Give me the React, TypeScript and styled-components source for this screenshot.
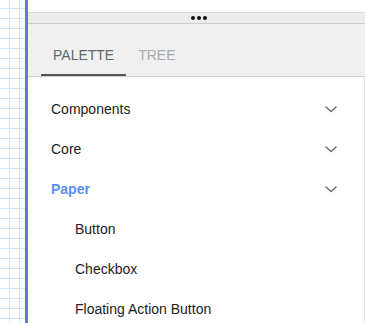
import React from "react";
import styled, { createGlobalStyle } from "styled-components";

const Global = createGlobalStyle`
  html, body { margin: 0; padding: 0; background: #fff; }
  body { font-family: "Liberation Sans", Arial, sans-serif; overflow: hidden; }
  * { box-sizing: border-box; }
`;

const Page = styled.div`
  display: flex;
  width: 365px;
  height: 323px;
  overflow: hidden;
`;

const Canvas = styled.div`
  width: 25px;
  flex: none;
  background-color: #fff;
  background-image:
    linear-gradient(to right, #cfe2f3 1px, transparent 1px),
    linear-gradient(to bottom, #cfe2f3 1px, transparent 1px);
  background-size: 10px 10px;
  background-position: 9px 8px;
`;

const Divider = styled.div`
  width: 3px;
  flex: none;
  background: #6a76d6;
`;

const Panel = styled.div`
  flex: 1;
  display: flex;
  flex-direction: column;
  min-width: 0;
  overflow: hidden;
`;

const TopGap = styled.div`
  flex: none;
  height: 12px;
  background: #fff;
`;

const Handle = styled.div`
  flex: none;
  height: 12px;
  background: #ececec;
  border-top: 1px solid #dcdcdc;
  border-bottom: 1px solid #cdcdcd;
  display: flex;
  align-items: center;
  justify-content: center;
  gap: 2px;
  padding-left: 4px;
`;

const Dot = styled.span`
  width: 4px;
  height: 4px;
  border-radius: 50%;
  background: #111;
`;

const TabBar = styled.div`
  flex: none;
  height: 53px;
  background: #f0f0f0;
  border-bottom: 1px solid #cfcfcf;
  display: flex;
  align-items: flex-end;
  padding-left: 13px;
`;

const Tab = styled.div<{ $active?: boolean }>`
  height: 40px;
  line-height: 38px;
  padding: 0 12px;
  font-size: 14px;
  color: ${(p) => (p.$active ? "#666" : "#aaa")};
  border-bottom: 2px solid ${(p) => (p.$active ? "#555" : "transparent")};
`;

const List = styled.div`
  flex: none;
  height: 260px;
  background: #fff;
  border-right: 1px solid #dedede;
  padding-top: 12px;
`;

const Row = styled.div<{ $indent?: boolean; $active?: boolean }>`
  height: 40px;
  line-height: 40px;
  display: flex;
  align-items: center;
  justify-content: space-between;
  padding-left: ${(p) => (p.$indent ? "47px" : "23px")};
  padding-right: 21px;
  font-size: 14px;
  color: ${(p) => (p.$active ? "#5591f0" : "#222")};
  font-weight: ${(p) => (p.$active ? 700 : 400)};
`;

const Chevron = () => (
  <svg width="24" height="24" viewBox="0 0 24 24">
    <path d="M6.5 9.5 L12 14.5 L17.5 9.5" fill="none" stroke="#707070" strokeWidth="1.5" />
  </svg>
);

export default function App() {
  return (
    <>
      <Global />
      <Page>
        <Canvas />
        <Divider />
        <Panel>
          <TopGap />
          <Handle>
            <Dot />
            <Dot />
            <Dot />
          </Handle>
          <TabBar>
            <Tab $active>PALETTE</Tab>
            <Tab>TREE</Tab>
          </TabBar>
          <List>
            <Row>
              <span>Components</span>
              <Chevron />
            </Row>
            <Row>
              <span>Core</span>
              <Chevron />
            </Row>
            <Row $active>
              <span>Paper</span>
              <Chevron />
            </Row>
            <Row $indent>
              <span>Button</span>
            </Row>
            <Row $indent>
              <span>Checkbox</span>
            </Row>
            <Row $indent>
              <span>Floating Action Button</span>
            </Row>
          </List>
        </Panel>
      </Page>
    </>
  );
}
